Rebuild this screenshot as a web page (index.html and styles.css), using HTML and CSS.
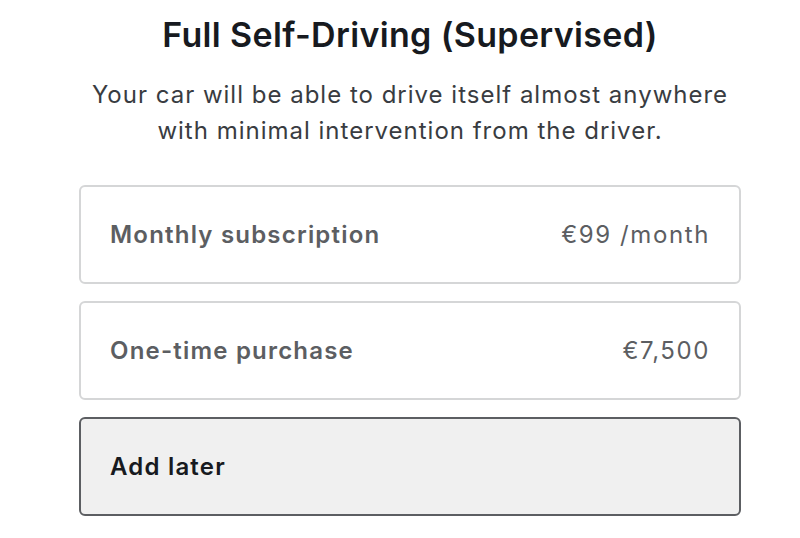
FILE: index.html
```html
<!DOCTYPE html>
<html lang="en">
<head>
  <meta charset="UTF-8">
  <meta name="viewport" content="width=device-width, initial-scale=1.0">
  <title>Full Self-Driving</title>
  <link rel="stylesheet" href="styles.css">
</head>
<body>
  <div class="fsd-panel">
    <h1 class="fsd-title">Full Self-Driving (Supervised)</h1>
    <p class="fsd-desc">Your car will be able to drive itself almost anywhere<br>with minimal intervention from the driver.</p>

    <div class="option-list">
      <div class="option">
        <span class="option-name">Monthly subscription</span>
        <span class="option-price">€99 /month</span>
      </div>
      <div class="option">
        <span class="option-name">One-time purchase</span>
        <span class="option-price">€7,500</span>
      </div>
      <div class="option selected">
        <span class="option-name">Add later</span>
      </div>
    </div>
  </div>
</body>
</html>
```

FILE: styles.css
```css
body {
  margin: 0;
  background: #fff;
  font-family: Inter, "Noto Sans", sans-serif;
  color: #171a20;
}

.fsd-panel {
  width: 662px;
  margin-left: 79px;
  padding-top: 13px;
}

.fsd-title {
  margin: 0;
  text-align: center;
  font-size: 34px;
  font-weight: 600;
  line-height: 44px;
  letter-spacing: 0.35px;
}

.fsd-desc {
  margin: 20px 0 36px;
  text-align: center;
  font-size: 24px;
  line-height: 36px;
  letter-spacing: 1px;
  color: #393c41;
}

.option-list {
  display: flex;
  flex-direction: column;
  gap: 17px;
}

.option {
  display: flex;
  justify-content: space-between;
  align-items: center;
  height: 99px;
  box-sizing: border-box;
  padding: 0 29px;
  border: 2px solid #d5d6d7;
  border-radius: 6px;
  font-size: 24px;
  color: #5c5e62;
}

.option-name {
  font-weight: 600;
  letter-spacing: 1.2px;
}

.option-price {
  letter-spacing: 1.6px;
}

.option.selected {
  border-color: #5c5e62;
  background: #f0f0f0;
  color: #171a20;
}
```
